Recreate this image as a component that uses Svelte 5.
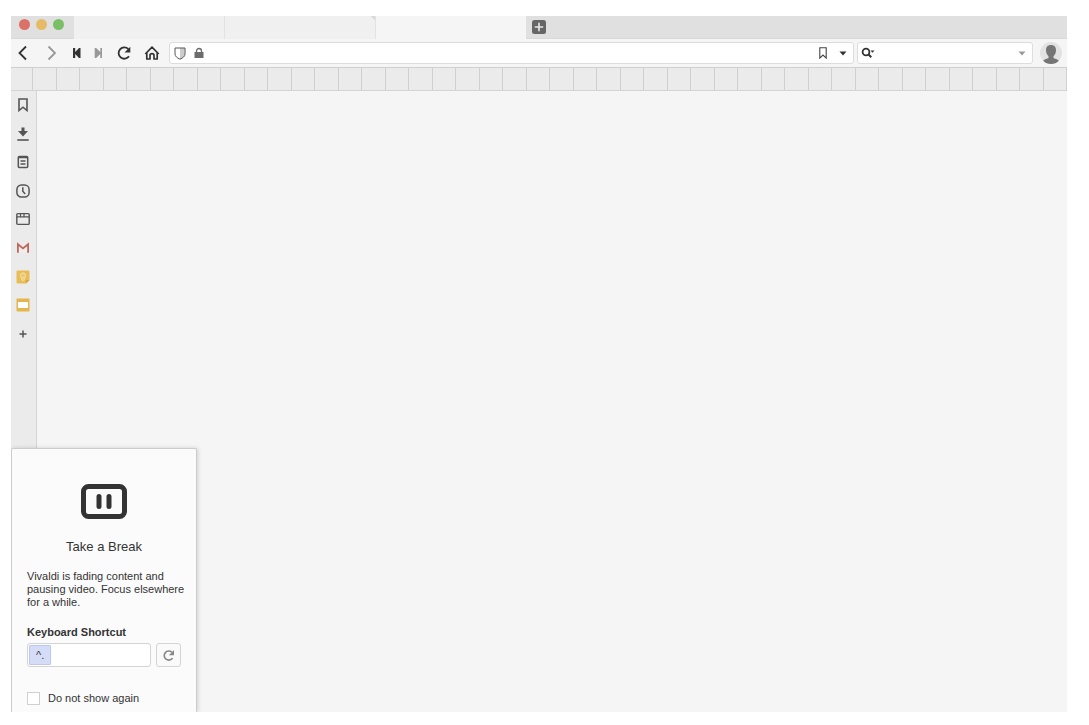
<script lang="ts">
    const bookmarks = Array.from({ length: 44 }, (_, i) => i);

    let address = $state("");
    let query = $state("");
    let shortcut = $state("^.");
    let hideNext = $state(false);
</script>

<div class="window">
    <header class="tab-bar">
        <div class="lights">
            <button class="light red" aria-label="Close"></button>
            <button class="light yellow" aria-label="Minimize"></button>
            <button class="light green" aria-label="Zoom"></button>
        </div>
        <button class="tab" aria-label="Tab 1"></button>
        <button class="tab marked" aria-label="Tab 2"></button>
        <button class="tab active" aria-label="Tab 3"></button>
        <div class="tab-rest">
            <button class="new-tab" aria-label="New tab">
                <svg width="14" height="14" viewBox="0 0 14 14">
                    <rect width="14" height="14" rx="2.5" fill="#666" />
                    <path d="M7 2.8v8.4M2.8 7h8.4" stroke="#e8e8e8" stroke-width="1.6" />
                </svg>
            </button>
        </div>
    </header>

    <nav class="toolbar">
        <button class="nav back" aria-label="Back">
            <svg width="16" height="16" viewBox="0 0 16 16">
                <path d="M11 1.5 4.500 8l6.500 6.500" fill="none" stroke="#333" stroke-width="1.8" />
            </svg>
        </button>
        <button class="nav forward" aria-label="Forward">
            <svg width="16" height="16" viewBox="0 0 16 16">
                <path d="M4.500 1.500 11 8l-6.500 6.500" fill="none" stroke="#999" stroke-width="1.8" />
            </svg>
        </button>
        <button class="nav rewind" aria-label="Rewind">
            <svg width="16" height="16" viewBox="0 0 16 16">
                <path d="M4 3h2.200v4L10 3h1.500v10H10L6.200 9v4H4z" fill="#333" />
            </svg>
        </button>
        <button class="nav fast" aria-label="Fast forward">
            <svg width="16" height="16" viewBox="0 0 16 16">
                <path d="M12 3h-1.700v4L6.200 3H4.700v10h1.500l4.100-4v4H12z" fill="#999" />
            </svg>
        </button>
        <button class="nav wide" aria-label="Reload">
            <svg width="16" height="16" viewBox="0 0 16 16">
                <path d="M13 11.300A5.700 5.700 0 1 1 12.300 4" fill="none" stroke="#333" stroke-width="1.8" />
                <path d="M14.300 1.800v5.800H8.500z" fill="#333" />
            </svg>
        </button>
        <button class="nav wide" aria-label="Home">
            <svg width="16" height="16" viewBox="0 0 16 16">
                <path
                    d="M1.300 9 8 2.200 14.700 9M2.800 8v6h3.200v-3.300a2 2 0 0 1 4 0V14h3.200V8"
                    fill="none"
                    stroke="#333"
                    stroke-width="1.7"
                    stroke-linejoin="round"
                />
            </svg>
        </button>

        <div class="field address">
            <svg width="12" height="13" viewBox="0 0 12 13">
                <path d="M6 1h4.500v6c0 2-2 3.700-4.500 5z" fill="#ccc" />
                <path
                    d="M1 1h10v6c0 2.300-2 3.900-5 5.200C3 10.900 1 9.300 1 7z"
                    fill="none"
                    stroke="#555"
                />
            </svg>
            <svg class="lock" width="10" height="12" viewBox="0 0 10 12">
                <path d="M2.500 6V4a2.500 2.500 0 0 1 5 0v2" fill="none" stroke="#6b6b6b" stroke-width="1.3" />
                <rect x="0.5" y="5" width="9" height="6" rx="0.5" fill="#6b6b6b" />
            </svg>
            <input type="text" aria-label="Address" bind:value={address} />
            <button class="nav" aria-label="Bookmark page">
                <svg width="8" height="12" viewBox="0 0 8 12">
                    <path d="M.8.7h6.400v10.400L4 8 .8 11.100z" fill="none" stroke="#444" stroke-width="1.1" />
                </svg>
            </button>
            <button class="nav" aria-label="Address history">
                <svg width="8" height="12" viewBox="0 0 8 12">
                    <path d="M.5 4.500h7L4 8.500z" fill="#333" />
                </svg>
            </button>
        </div>

        <div class="field search">
            <svg width="15" height="12" viewBox="0 0 15 12">
                <circle cx="5" cy="5" r="3.4" fill="none" stroke="#333" stroke-width="1.8" />
                <path d="M7.500 7.500 10.300 10.300" stroke="#333" stroke-width="2" />
                <path d="M9.500 3.500h4L11.500 5.800z" fill="#333" />
            </svg>
            <input type="text" aria-label="Search" bind:value={query} />
            <button class="nav" aria-label="Search history">
                <svg width="8" height="12" viewBox="0 0 8 12">
                    <path d="M.5 4.500h7L4 8.500z" fill="#999" />
                </svg>
            </button>
        </div>

        <button class="nav avatar" aria-label="Profile">
            <svg width="22" height="22" viewBox="0 0 22 22">
                <circle cx="11" cy="11" r="11" fill="#e2e2e2" />
                <path
                    d="M11 3c3.500 0 5 2.200 5 5.200 0 2.500-1 4.600-2.500 6v1.800c1 .8 4.200 1 5.300 2.800A11 11 0 0 1 11 22a11 11 0 0 1-7.800-3.200c1.100-1.800 4.300-2 5.300-2.800v-1.800C7 12.800 6 10.700 6 8.200 6 5.200 7.500 3 11 3z"
                    fill="#757575"
                />
            </svg>
        </button>
    </nav>

    <div class="bookmark-bar">
        <span class="bookmark first"></span>
        {#each bookmarks as id (id)}
            <span class="bookmark"></span>
        {/each}
    </div>

    <div class="body">
        <aside class="panels">
            <div class="panel-list">
                <button class="nav" aria-label="Bookmarks">
                    <svg width="14" height="14" viewBox="0 0 14 14">
                        <path d="M3 1h8v11.500L7 9.200l-4 3.300z" fill="none" stroke="#555" stroke-width="1.6" />
                    </svg>
                </button>
                <button class="nav" aria-label="Downloads">
                    <svg width="14" height="14" viewBox="0 0 14 14">
                        <path d="M5.500.5h3V4H12L7 9.500 2 4h3.500z" fill="#555" />
                        <path d="M1.300 13h11.400" stroke="#555" stroke-width="1.6" />
                    </svg>
                </button>
                <button class="nav" aria-label="Notes">
                    <svg width="14" height="14" viewBox="0 0 14 14">
                        <rect x="2.3" y="1.6" width="9.400" height="10.800" rx="1" fill="none" stroke="#555" stroke-width="1.5" />
                        <path d="M2.300 2.500h9.400M4.500 6h5M4.500 9h5" stroke="#555" stroke-width="1.4" />
                    </svg>
                </button>
                <button class="nav" aria-label="History">
                    <svg width="14" height="14" viewBox="0 0 14 14">
                        <rect x=".9" y=".9" width="12.200" height="12.200" rx="4.5" fill="none" stroke="#555" stroke-width="1.5" />
                        <path d="M6.800 3.300v4l2.400 2.600" fill="none" stroke="#555" stroke-width="1.5" />
                    </svg>
                </button>
                <button class="nav" aria-label="Windows">
                    <svg width="14" height="14" viewBox="0 0 14 14">
                        <rect x=".8" y="1.600" width="12.400" height="10.800" rx="1" fill="none" stroke="#555" stroke-width="1.4" />
                        <path d="M1 4.800h12M4.500 2v2.500M8 2v2.500" stroke="#555" stroke-width="1.2" />
                    </svg>
                </button>
                <button class="nav" aria-label="Mail">
                    <svg width="14" height="14" viewBox="0 0 14 14">
                        <path d="M1.500 2.500 7 7l5.500-4.500v9.200h-11z" fill="#eee" />
                        <path d="M1.900 11.800V3.200L7 7.400l5.100-4.200v8.600" fill="none" stroke="#c0665d" stroke-width="1.8" />
                    </svg>
                </button>
                <button class="nav" aria-label="Keep">
                    <svg width="14" height="14" viewBox="0 0 14 14">
                        <path d="M1.500.5h11a1 1 0 0 1 1 1V10L10 13.500H1.500a1 1 0 0 1-1-1v-11a1 1 0 0 1 1-1z" fill="#e8bd57" />
                        <path d="M13.500 10H10v3.500z" fill="#d9a440" />
                        <circle cx="7" cy="5.5" r="2.6" fill="#ecc86f" stroke="#f5e2b2" />
                        <path d="M5.800 8v2.200h2.400V8" fill="none" stroke="#f5e2b2" />
                    </svg>
                </button>
                <button class="nav" aria-label="Slides">
                    <svg width="14" height="14" viewBox="0 0 14 14">
                        <rect x=".5" y=".5" width="13" height="13" rx="1" fill="#e6b54d" />
                        <rect x="2" y="4" width="10" height="6" fill="#fff" />
                    </svg>
                </button>
                <button class="nav" aria-label="Add web panel">
                    <svg width="14" height="14" viewBox="0 0 14 14">
                        <path d="M7 3.500v7M3.500 7h7" stroke="#555" stroke-width="1.5" />
                    </svg>
                </button>
            </div>
        </aside>
        <main></main>
    </div>

    <section class="popup">
        <svg class="pause" width="46" height="36" viewBox="0 0 46 36">
            <rect x="2.5" y="2.5" width="41" height="30" rx="5" fill="none" stroke="#333" stroke-width="5" />
            <path d="M18 12.500v10M28 12.500v10" stroke="#333" stroke-width="5" stroke-linecap="round" />
        </svg>
        <h1>Take a Break</h1>
        <p>Vivaldi is fading content and pausing video. Focus elsewhere for a while.</p>
        <label class="caption" for="shortcut">Keyboard Shortcut</label>
        <div class="shortcut-row">
            <div class="shortcut">
                <input id="shortcut" type="text" bind:value={shortcut} />
            </div>
            <button class="reset" aria-label="Reset shortcut">
                <svg width="13" height="13" viewBox="0 0 16 16">
                    <path d="M13 11.200A5.600 5.600 0 1 1 12.200 4" fill="none" stroke="#888" stroke-width="2" />
                    <path d="M14.800 1.300v6.300H8.500z" fill="#888" />
                </svg>
            </button>
        </div>
        <label class="check">
            <input type="checkbox" bind:checked={hideNext} />
            Do not show again
        </label>
    </section>
</div>

<style>
    :global(body) {
        margin: 0;
        background: #fff;
        font-family: "Liberation Sans", Helvetica, Arial, sans-serif;
    }

    .window {
        position: relative;
        display: flex;
        flex-direction: column;
        min-height: calc(100vh - 29px);
        margin: 16px 22px 0 11px;
        background: #f5f5f5;
        color: #333;
    }

    button {
        display: flex;
        align-items: center;
        justify-content: center;
        padding: 0;
        border: 0;
        background: none;
        cursor: pointer;
    }

    input[type="text"] {
        min-width: 0;
        padding: 0;
        border: 0;
        outline: 0;
        background: none;
        color: inherit;
        font: inherit;
    }

    .tab-bar {
        display: flex;
        height: 23px;
    }

    .lights,
    .tab-rest {
        display: flex;
        box-sizing: border-box;
        background: #e0e0e0;
        border-bottom: 1px solid #d9d9d9;
    }

    .lights {
        gap: 6px;
        width: 63px;
        padding: 3px 8px;
    }

    .light {
        width: 11px;
        height: 11px;
        border-radius: 50%;
    }

    .red {
        background: #dc7168;
    }

    .yellow {
        background: #e5bb67;
    }

    .green {
        background: #7abf65;
    }

    .tab {
        width: 151px;
        box-sizing: border-box;
        background: #f0f0f0;
        border-right: 1px solid #e2e2e2;
    }

    .marked {
        background: linear-gradient(225deg, #d9d9d9 3px, #f0f0f0 3px);
    }

    .active {
        width: 150px;
        background: #f5f5f5;
        border: 0;
    }

    .tab-rest {
        flex: 1;
        padding-left: 6px;
    }

    .toolbar {
        display: flex;
        align-items: center;
        height: 28px;
        border-bottom: 1px solid #cfcfcf;
    }

    .nav {
        flex: none;
        width: 20px;
    }

    .back {
        width: 24px;
    }

    .forward {
        width: 33px;
    }

    .rewind {
        width: 18px;
    }

    .fast {
        width: 24px;
    }

    .wide {
        width: 28px;
    }

    .field {
        display: flex;
        align-items: center;
        box-sizing: border-box;
        height: 22px;
        border: 1px solid #ddd;
        border-radius: 3px;
        background: #fff;
    }

    .field input {
        flex: 1;
        font-size: 12px;
    }

    .address {
        flex: 1;
        margin-left: 3px;
        padding-left: 4px;
    }

    .lock {
        margin: 0 8px;
    }

    .search {
        width: 176px;
        margin: 0 7px 0 3px;
        padding-left: 3px;
    }

    .avatar {
        width: 22px;
        margin-right: 5px;
    }

    .bookmark-bar {
        display: flex;
        height: 22px;
        background: #ebebeb;
        border-bottom: 1px solid #d4d4d4;
    }

    .bookmark {
        flex: 1;
        border-right: 1px solid #d0d0d0;
    }

    .first {
        flex: 0 0 21px;
    }

    .body {
        display: flex;
        flex: 1;
    }

    .panels {
        box-sizing: border-box;
        width: 26px;
        background: #ebebeb;
        border-right: 1px solid #d4d4d4;
    }

    .panel-list {
        display: grid;
        grid-auto-rows: 1fr;
        height: 257px;
    }

    .panels .nav {
        width: 23px;
    }

    main {
        flex: 1;
    }

    .popup {
        position: absolute;
        left: 0;
        bottom: 0;
        display: flex;
        flex-direction: column;
        box-sizing: border-box;
        width: 186px;
        padding: 35px 0 6px 15px;
        border: 1px solid #ccc;
        border-bottom: 0;
        border-radius: 2px 2px 0 0;
        background: #fbfbfb;
        box-shadow: 1px 0 4px rgba(0, 0, 0, 0.15);
        clip-path: inset(-4px -6px 0 0);
        font-size: 11px;
    }

    .pause {
        margin-left: 54px;
    }

    h1 {
        margin: 19px 15px 0 0;
        font-size: 13px;
        font-weight: 400;
        line-height: 16px;
        text-align: center;
    }

    p {
        width: 160px;
        margin: 15px 0 0;
        line-height: 13px;
    }

    .caption {
        margin-top: 16px;
        font-weight: 700;
        line-height: 14px;
    }

    .shortcut-row {
        display: flex;
        gap: 5px;
        margin-top: 4px;
    }

    .shortcut {
        box-sizing: border-box;
        display: flex;
        width: 124px;
        height: 24px;
        padding: 1px;
        border: 1px solid #d4d4d4;
        border-radius: 3px;
        background: #fff;
    }

    .shortcut input[type="text"] {
        box-sizing: border-box;
        width: 22px;
        padding-left: 6px;
        border: 1px solid #bcc7f2;
        border-radius: 1px;
        background: #d5dcf7;
    }

    .reset {
        box-sizing: border-box;
        width: 25px;
        height: 24px;
        border: 1px solid #d4d4d4;
        border-radius: 3px;
        background: #fafafa;
    }

    .check {
        display: flex;
        align-items: center;
        gap: 8px;
        height: 16px;
        margin-top: 23px;
    }

    .check input {
        appearance: none;
        box-sizing: border-box;
        width: 13px;
        height: 13px;
        margin: 0;
        border: 1px solid #d0d0d0;
        background: #fff;
    }

    .check input:checked {
        background: #666;
    }
</style>
